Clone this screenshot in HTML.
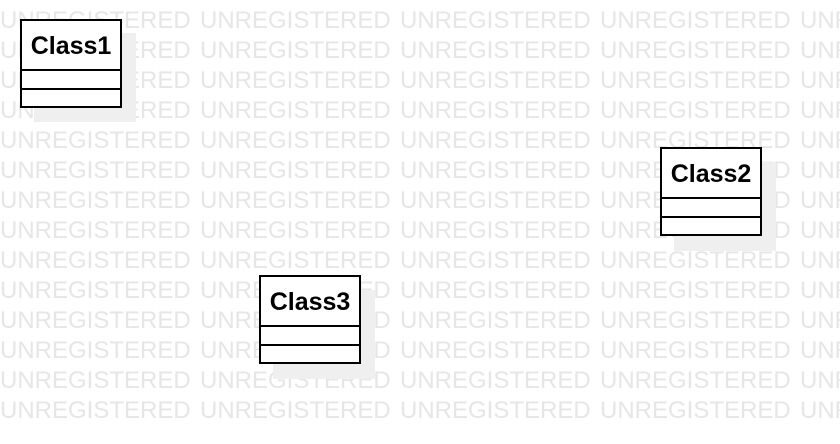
<!DOCTYPE html>
<html><head><meta charset="utf-8"><style>
html,body{margin:0;padding:0;background:#fff;width:840px;height:444px;overflow:hidden;position:relative;font-family:"Liberation Sans",sans-serif}
.wm{position:absolute;left:0;width:840px;overflow:hidden;white-space:nowrap;font-size:24px;line-height:30px;color:#e6e6e6}
.wm span{display:inline-block;width:200px}
.sh{position:absolute;background:#efefef;width:102px;height:89px}
.cls{position:absolute;width:98px;height:85px;border:2px solid #000;background:#fff}
.cls .t{height:48px;line-height:50px;text-align:center;font-weight:bold;font-size:25px;border-bottom:2px solid #000}
.cls .a{height:17px;border-bottom:2px solid #000}
</style></head><body>
<div id="w"></div>
<script>
var h='';for(var r=0;r<14;r++){h+='<div class="wm" style="top:'+(6+30*r)+'px">';for(var c=0;c<5;c++)h+='<span>UNREGISTERED</span>';h+='</div>';}
document.getElementById('w').innerHTML=h;
</script>
<div class="sh" style="left:34px;top:33px"></div>
<div class="sh" style="left:674px;top:162px"></div>
<div class="sh" style="left:273px;top:290px"></div>
<div class="cls" style="left:20px;top:19px"><div class="t">Class1</div><div class="a"></div></div>
<div class="cls" style="left:660px;top:147px"><div class="t">Class2</div><div class="a"></div></div>
<div class="cls" style="left:259px;top:275px"><div class="t">Class3</div><div class="a"></div></div>
</body></html>
